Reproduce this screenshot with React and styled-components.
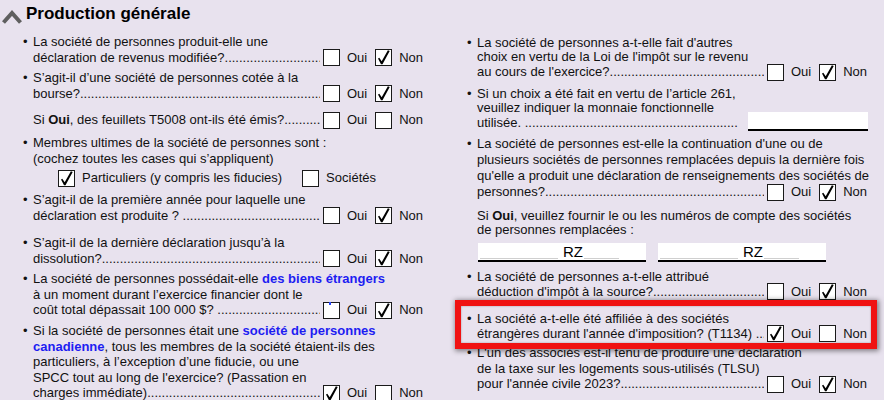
import React from "react";
import styled, { createGlobalStyle } from "styled-components";

const GlobalStyle = createGlobalStyle`
  html, body { margin: 0; padding: 0; background: #e8e2ee; }
  body {
    font-family: "Liberation Sans", Arial, sans-serif;
    color: #111;
    font-size: 13px;
  }
`;

const Page = styled.div`
  width: 884px;
  height: 400px;
  overflow: hidden;
  background: #e8e2ee;
`;

const Header = styled.div`
  display: flex;
  align-items: center;
  gap: 3px;
  height: 28px;
  padding-left: 1px;
  box-sizing: border-box;
`;

const Title = styled.h1`
  margin: 0;
  font-size: 17px;
  font-weight: bold;
  line-height: 20px;
  color: #000;
`;

const Columns = styled.div`
  display: grid;
  grid-template-columns: 444px 440px;
`;

const Column = styled.div`
  display: flex;
  flex-direction: column;
  align-items: flex-start;
`;

const Item = styled.div`
  --lh: ${(p) => p.$lh || 15.5}px;
  position: relative;
  display: grid;
  grid-template-columns: 11px 390px;
  width: 401px;
  margin-left: 22px;
  margin-top: ${(p) => p.$gap || 0}px;
  line-height: var(--lh);
`;

const Bullet = styled.span`
  padding-left: 1px;
`;

const Body = styled.div`
  display: flex;
  flex-direction: column;
`;

const Line = styled.div`
  white-space: nowrap;
  height: var(--lh);
`;

const AnswerLine = styled.div`
  display: flex;
  align-items: center;
  white-space: nowrap;
  height: var(--lh);
`;

const Leader = styled.span`
  flex: 1;
  min-width: 0;
  overflow: hidden;
  white-space: nowrap;
  &::after {
    content: "........................................................................................................................................";
  }
`;

const Choices = styled.div`
  display: flex;
  align-items: center;
  flex-shrink: 0;
  margin-left: 3px;
`;

const Choice = styled.span`
  display: flex;
  align-items: center;
  gap: 7px;
  margin-right: 8px;
  &:last-child { margin-right: 0; }
`;

const Box = styled.span`
  position: relative;
  display: inline-block;
  width: 17px;
  height: 17px;
  box-sizing: border-box;
  border: 1px solid #1a1a1a;
  background: #fff;
  flex-shrink: 0;
  margin: -1px 0;
  ${(p) =>
    p.$mark &&
    `&::after {
      content: "";
      position: absolute;
      left: 5px;
      top: -1px;
      width: 2px;
      height: 3px;
      background: #2747ff;
    }`}
`;

const CheckSvg = styled.svg`
  display: block;
  width: 15px;
  height: 15px;
`;

const Link = styled.b`
  color: #1d1df2;
`;

const MultiRow = styled.div`
  display: flex;
  align-items: center;
  height: 17px;
  padding-left: 25px;
  gap: 7px;
`;

const Spacer = styled.span`
  width: 6px;
`;

const Field = styled.span`
  flex-shrink: 0;
  width: 120px;
  height: 19px;
  box-sizing: border-box;
  background: #fff;
  border-bottom: 2px solid #000;
  margin-left: 10px;
  margin-right: -1px;
  margin-bottom: 3px;
`;

const AccountRow = styled.div`
  display: flex;
  gap: 12px;
  margin-left: 34px;
  margin-top: ${(p) => p.$gap}px;
`;

const AccountField = styled.div`
  display: flex;
  align-items: flex-end;
  width: 168px;
  height: 19px;
  box-sizing: border-box;
  background: #fff;
  border-bottom: 2px solid #000;
  padding-left: 2px;
`;

const Segment = styled.span`
  width: ${(p) => p.$w}px;
  height: 1px;
  background: #cfcfcf;
  margin-bottom: 1px;
`;

const Prefix = styled.span`
  font-size: 15px;
  line-height: 17px;
  color: #000;
  margin: 0 1px 0 5px;
`;

const Highlight = styled.div`
  position: absolute;
  left: -11px;
  right: -10px;
  top: -10.5px;
  bottom: -8.5px;
  border: 6px solid #f01212;
  box-shadow: 1px 1px 5px 1px rgba(0, 0, 0, 0.45), inset 0 0 2px rgba(0, 0, 0, 0.35);
  pointer-events: none;
  z-index: 2;
`;

const Chevron = () => (
  <svg width="22" height="22" viewBox="0 0 22 22">
    <polyline
      points="2.5,19.5 11,10 19.5,19.5"
      fill="none"
      stroke="#5f5f5f"
      strokeWidth="4"
      strokeLinejoin="miter"
    />
  </svg>
);

const Check = () => (
  <CheckSvg viewBox="0 0 15 15">
    <path d="M2 8.6 L3.3 7.8 L5.7 11.3 L11.9 0.2 L13.7 1.1 L6.5 14.3 L5 14.3 Z" fill="#000" />
  </CheckSvg>
);

const CheckBox = ({ checked, mark }) => (
  <Box $mark={mark}>{checked && <Check />}</Box>
);

const YesNo = ({ value, mark }) => (
  <Choices>
    <Choice>
      <CheckBox checked={value === "oui"} mark={mark} />
      Oui
    </Choice>
    <Choice>
      <CheckBox checked={value === "non"} />
      Non
    </Choice>
  </Choices>
);

const Question = ({ gap, lh, lines, last, value, bullet = true, mark, children }) => (
  <Item $gap={gap} $lh={lh}>
    <Bullet>{bullet ? "•" : ""}</Bullet>
    <Body>
      {lines.map((l, i) => (
        <Line key={i}>{l}</Line>
      ))}
      <AnswerLine>
        <span>{last}</span>
        <Leader />
        {value ? <YesNo value={value} mark={mark} /> : <Field />}
      </AnswerLine>
    </Body>
    {children}
  </Item>
);

export default function App() {
  return (
    <Page>
      <GlobalStyle />
      <Header>
        <Chevron />
        <Title>Production générale</Title>
      </Header>
      <Columns>
        <Column>
          <Question
            gap={6.25}
            lines={["La société de personnes produit-elle une"]}
            last="déclaration de revenus modifiée?"
            value="non"
          />
          <Question
            gap={5}
            lines={["S’agit-il d’une société de personnes cotée à la"]}
            last="bourse?"
            value="non"
          />
          <Question
            gap={11}
            bullet={false}
            lines={[]}
            last={
              <>
                Si <b>Oui</b>, des feuillets T5008 ont-ils été émis?
              </>
            }
            value="none"
          />
          <Item $gap={7.5}>
            <Bullet>•</Bullet>
            <Body>
              <Line>Membres ultimes de la société de personnes sont :</Line>
              <Line>(cochez toutes les cases qui s’appliquent)</Line>
            </Body>
          </Item>
          <Item $gap={3.25}>
            <Bullet />
            <MultiRow>
              <CheckBox checked />
              <span>Particuliers (y compris les fiducies)</span>
              <Spacer />
              <CheckBox />
              <span>Sociétés</span>
            </MultiRow>
          </Item>
          <Question
            gap={5.75}
            lines={["S’agit-il de la première année pour laquelle une"]}
            last={"déclaration est produite ?\u00a0"}
            value="non"
          />
          <Question
            gap={12}
            lines={["S’agit-il de la dernière déclaration jusqu’à la"]}
            last="dissolution?"
            value="non"
          />
          <Question
            gap={5}
            lines={[
              <>
                La société de personnes possédait-elle <Link>des biens étrangers</Link>
              </>,
              "à un moment durant l’exercice financier dont le",
            ]}
            last={"coût total dépassait 100 000 $?\u00a0"}
            value="non"
            mark
          />
          <Question
            gap={5.5}
            lines={[
              <>
                Si la société de personnes était une <Link>société de personnes</Link>
              </>,
              <>
                <Link>canadienne</Link>, tous les membres de la société étaient-ils des
              </>,
              "particuliers, à l’exception d’une fiducie, ou une",
              "SPCC tout au long de l'exercice? (Passation en",
            ]}
            last="charges immédiate)"
            value="oui"
          />
        </Column>

        <Column>
          <Question
            gap={7.75}
            lh={14.5}
            lines={[
              "La société de personnes a-t-elle fait d'autres",
              "choix en vertu de la Loi de l'impôt sur le revenu",
            ]}
            last="au cours de l'exercice?"
            value="non"
          />
          <Question
            gap={7.5}
            lh={14.5}
            lines={[
              "Si un choix a été fait en vertu de l’article 261,",
              "veuillez indiquer la monnaie fonctionnelle",
            ]}
            last={"utilisée.\u00a0"}
          />
          <Question
            gap={5.75}
            lh={16}
            lines={[
              "La société de personnes est-elle la continuation d'une ou de",
              "plusieurs sociétés de personnes remplacées depuis la dernière fois",
              "qu'elle a produit une déclaration de renseignements des sociétés de",
            ]}
            last="personnes?"
            value="non"
          />
          <Item $gap={8.75} $lh={14.5}>
            <Bullet />
            <Body>
              <Line>
                Si <b>Oui</b>, veuillez fournir le ou les numéros de compte des sociétés
              </Line>
              <Line>de personnes remplacées :</Line>
            </Body>
          </Item>
          <AccountRow $gap={5.25}>
            {[0, 1].map((k) => (
              <AccountField key={k}>
                <Segment $w={78} />
                <Prefix>RZ</Prefix>
                <Segment $w={35} />
              </AccountField>
            ))}
          </AccountRow>
          <Question
            gap={6.5}
            lh={15}
            lines={["La société de personnes a-t-elle attribué"]}
            last="déduction d'impôt à la source?"
            value="non"
          />
          <Question
            gap={12}
            lh={15}
            lines={["La société a-t-elle été affiliée à des sociétés"]}
            last={"étrangères durant l'année d'imposition? (T1134)\u00a0"}
            value="oui"
          >
            <Highlight />
          </Question>
          <Question
            gap={4.75}
            lines={[
              "L'un des associés est-il tenu de produire une déclaration",
              "de la taxe sur les logements sous-utilisés (TLSU)",
            ]}
            last="pour l'année civile 2023?"
            value="non"
          />
        </Column>
      </Columns>
    </Page>
  );
}
